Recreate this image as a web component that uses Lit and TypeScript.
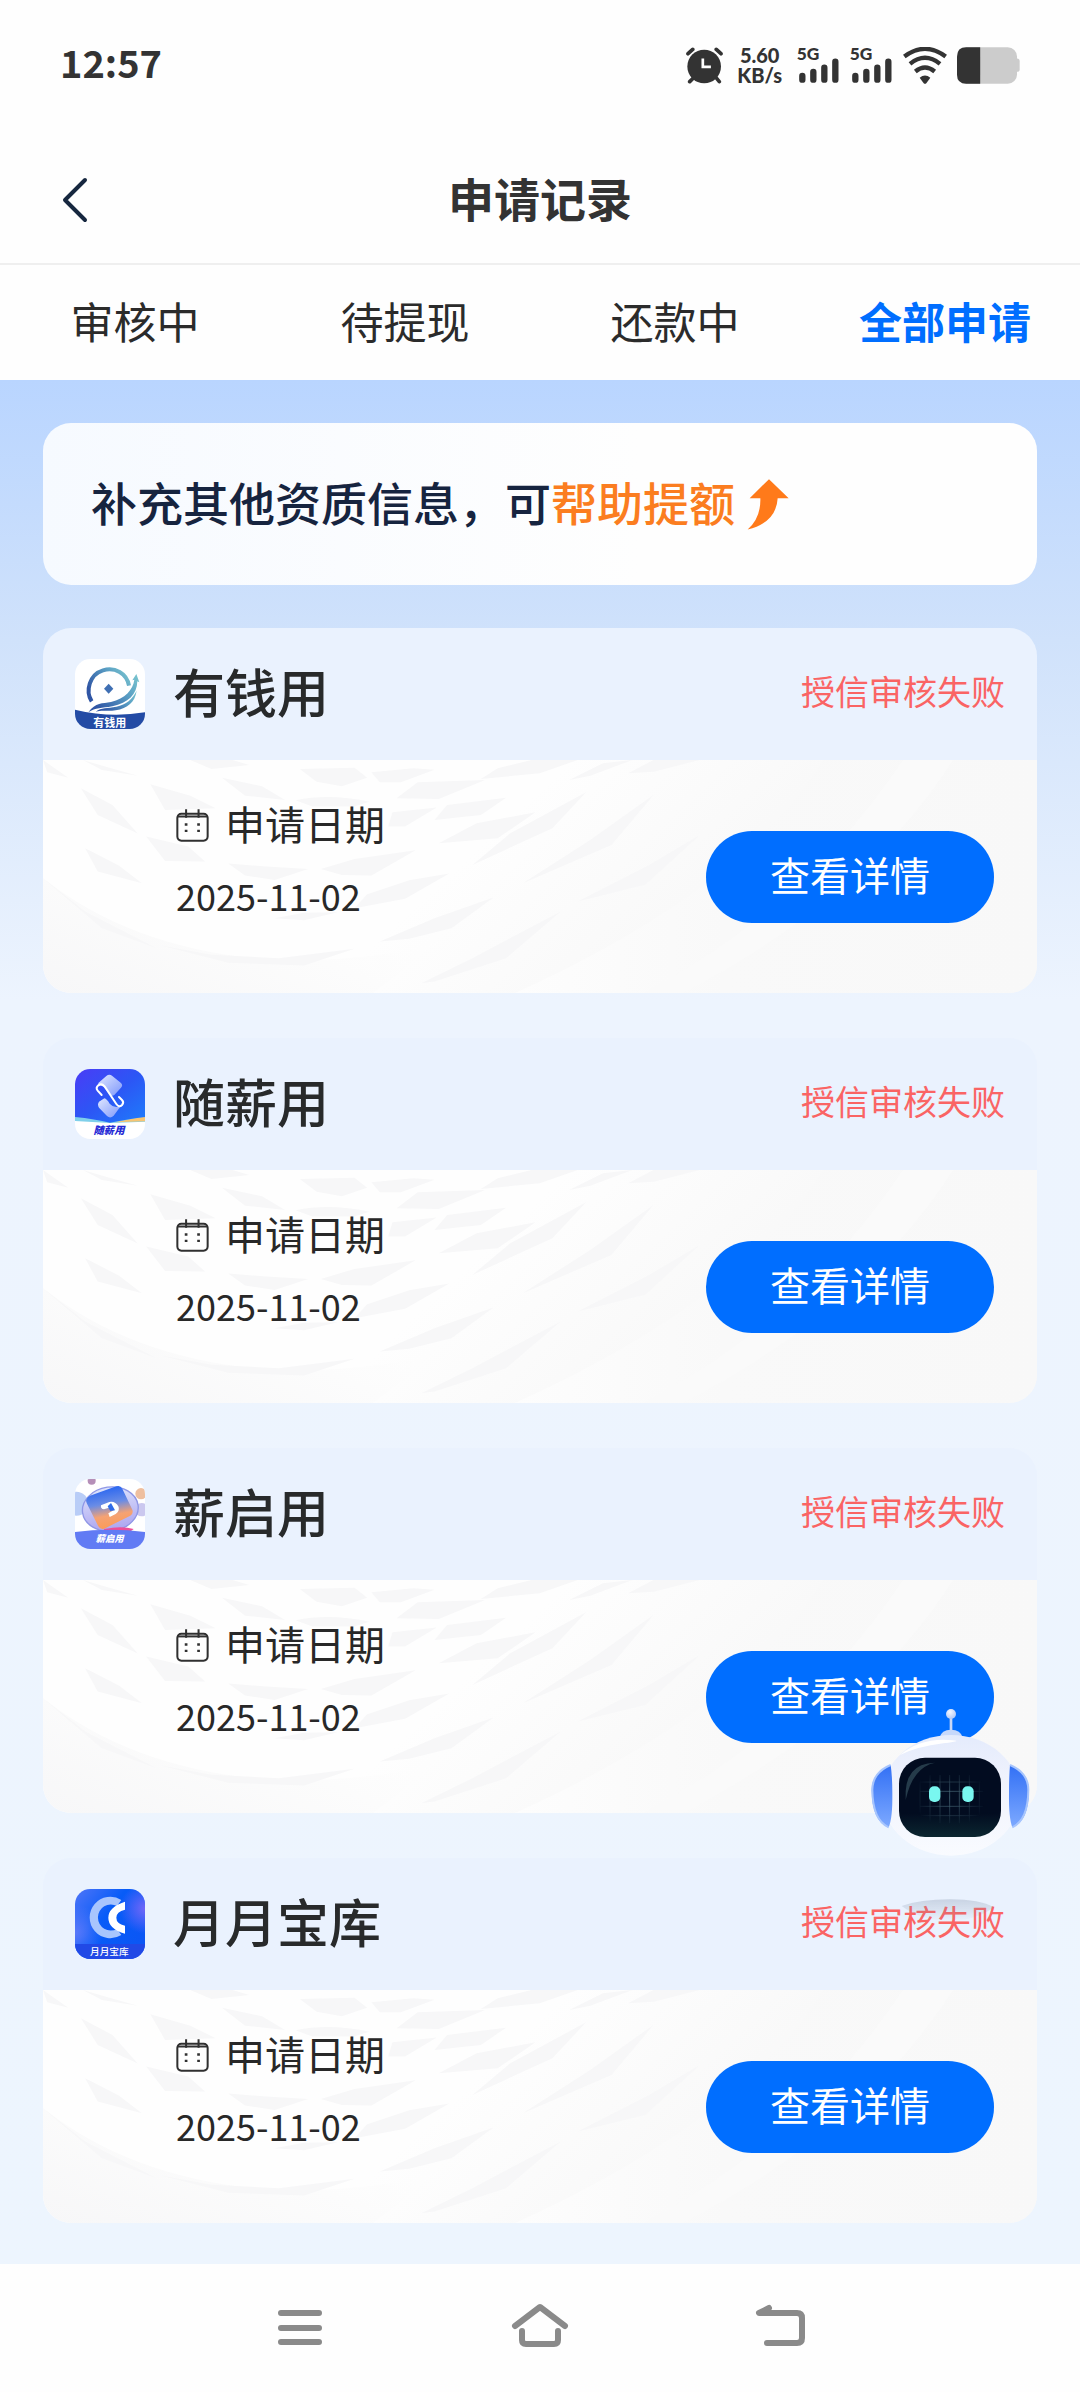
import { LitElement, html, css, svg, type TemplateResult } from "lit";
import { customElement, property } from "lit/decorators.js";

const youqian = html`<svg class="logo" viewBox="0 0 210 210" aria-hidden="true">
  <defs>
    <linearGradient id="ring" x1="0" x2="1" y1=".6" y2="0"><stop offset="0" stop-color="#2f55a4"/><stop offset=".6" stop-color="#5a9fc4"/><stop offset="1" stop-color="#7cc8cf"/></linearGradient>
    <clipPath id="c1"><rect width="210" height="210" rx="46"/></clipPath>
  </defs>
  <g clip-path="url(#c1)">
    <rect width="210" height="210" fill="#fff"/>
    <path d="M0 152Q105 178 210 160V210H0Z" fill="#234ba5"/>
    <path d="M50 127C30 96 44 46 84 34C120 24 155 42 162 80" fill="none" stroke="url(#ring)" stroke-width="12"/>
    <path d="M101 74L115 89L101 104L87 89Z" fill="#3f6fb3"/>
    <path d="M40 160C62 130 82 134 108 129C150 119 174 92 178 62L172 64L184 45L193 70L187 67C186 106 160 132 112 142C80 148 62 146 40 160Z" fill="url(#ring)"/>
    <path d="M62 158C80 144 96 149 124 143C154 136 172 121 185 95C180 130 158 147 122 154C96 158 84 152 62 158Z" fill="url(#ring)"/>
    <text x="104" y="203" text-anchor="middle" font-size="33" font-weight="700" fill="#fff">有钱用</text>
  </g></svg>`;

const suixin = html`<svg class="logo" viewBox="0 0 210 210" aria-hidden="true">
  <defs>
    <linearGradient id="sx" x1="0" x2="1" y1="0" y2="1"><stop offset="0" stop-color="#4a3cf6"/><stop offset=".5" stop-color="#2c56f5"/><stop offset="1" stop-color="#1e7cfb"/></linearGradient>
    <linearGradient id="sp" x1="0" x2="1" y1="0" y2="1"><stop offset="0" stop-color="#dfe6ff"/><stop offset="1" stop-color="#7d97fb"/></linearGradient>
    <clipPath id="c2"><rect width="210" height="210" rx="46"/></clipPath>
  </defs>
  <g clip-path="url(#c2)">
    <rect width="210" height="210" fill="#fff"/>
    <path d="M0 138L105 156L210 142V158L105 162L0 156Z" fill="#7fd0ea"/>
    <path d="M120 160L210 142V157Z" fill="#f6c573"/>
    <path d="M0 0H210V144Q150 152 105 161Q60 150 0 144Z" fill="url(#sx)"/>
    <path d="M70 42L94 21Q103 14 112 21L138 42Q145 49 138 56L118 78Q110 83 103 76L88 56Q80 46 70 48Z" fill="url(#sp)"/>
    <path d="M72 98L88 88Q96 90 104 104Q118 120 138 110L116 140Q106 150 96 141L72 116Q66 106 72 98Z" fill="url(#sp)"/>
    <path d="M80 78L68 65Q61 57 70 49Q80 42 89 52L124 105Q132 117 141 108Q148 100 141 93L132 84" fill="none" stroke="#fff" stroke-width="6" stroke-linecap="round"/>
    <text x="102" y="194" text-anchor="middle" font-size="31" font-weight="900" font-style="italic" fill="#262ad5">随薪用</text>
  </g></svg>`;

const xinqi = html`<svg class="logo" viewBox="0 0 210 210" aria-hidden="true">
  <defs>
    <linearGradient id="xq" x1=".4" x2=".6" y1="0" y2="1"><stop offset="0" stop-color="#2362f2"/><stop offset=".4" stop-color="#698ce6"/><stop offset=".68" stop-color="#f5a273"/><stop offset="1" stop-color="#fb9a55"/></linearGradient>
    <linearGradient id="xb" x1="0" x2="0" y1="0" y2="1"><stop offset="0" stop-color="#dce3fc"/><stop offset="1" stop-color="#aca4f0"/></linearGradient>
    <clipPath id="c3"><rect width="210" height="210" rx="46"/></clipPath>
  </defs>
  <g clip-path="url(#c3)">
    <rect width="210" height="210" fill="#fff"/>
    <circle cx="4" cy="74" r="36" fill="#b9cdf7"/>
    <circle cx="50" cy="5" r="12" fill="#b58fb8"/>
    <circle cx="198" cy="44" r="17" fill="#eebf9f"/>
    <circle cx="200" cy="92" r="20" fill="#cbc8ef"/>
    <ellipse cx="106" cy="90" rx="84" ry="66" transform="rotate(-8 106 90)" fill="url(#xb)" stroke="#8f97e6" stroke-width="4"/>
    <path d="M34 62Q36 54 45 50L124 22Q136 18 142 29L172 92Q176 104 166 110L88 149Q76 153 70 142L36 74Q32 67 34 62Z" fill="url(#xq)"/>
    <path d="M78 79L103 69Q120 65 130 82Q136 95 122 105L104 114L100 103L116 94L111 83L87 91Q76 90 78 79Z" fill="#fff"/>
    <path d="M98 82L108 72L120 94L106 96Z" fill="#306ce8"/>
    <path d="M88 150Q140 140 176 150L160 162H80Z" fill="#ed4e98"/>
    <path d="M0 159Q105 145 210 159V210H0Z" fill="#617bf4"/>
    <text x="104" y="189" text-anchor="middle" font-size="28" font-weight="900" font-style="italic" fill="#fff">薪启用</text>
  </g></svg>`;

const yueyue = html`<svg class="logo" viewBox="0 0 210 210" aria-hidden="true">
  <defs>
    <linearGradient id="yy" x1="0" x2="1" y1=".1" y2=".9"><stop offset="0" stop-color="#4772f8"/><stop offset=".4" stop-color="#075cf8"/><stop offset="1" stop-color="#0c55f4"/></linearGradient>
    <radialGradient id="yp" cx="1" cy=".28" r=".36"><stop offset="0" stop-color="#7167f8"/><stop offset="1" stop-color="#7167f8" stop-opacity="0"/></radialGradient>
    <radialGradient id="yq" cx="0" cy=".62" r=".4"><stop offset="0" stop-color="#5a79fa"/><stop offset="1" stop-color="#5a79fa" stop-opacity="0"/></radialGradient>
    <clipPath id="c4"><rect width="210" height="210" rx="46"/></clipPath>
  </defs>
  <g clip-path="url(#c4)">
    <rect width="210" height="210" fill="url(#yy)"/>
    <rect width="210" height="210" fill="url(#yp)"/>
    <rect width="210" height="210" fill="url(#yq)"/>
    <path d="M139 33A62 62 0 1 0 139 138L126 120A39 39 0 1 1 126 51Z" fill="#a8c5fd"/>
    <path d="M150 38V62Q124 68 124 86Q124 104 150 110V134Q100 120 100 86Q100 54 150 38Z" fill="#fff"/>
    <path d="M0 165H210V210H0Z" fill="#2149e6"/>
    <text x="103" y="197" text-anchor="middle" font-size="29" font-weight="500" fill="#fff">月月宝库</text>
  </g></svg>`;

const texture = html`<svg class="texture" viewBox="0 0 994 233" preserveAspectRatio="none" aria-hidden="true">
  <defs>
    <linearGradient id="base" x1="0" x2="1" y1="0" y2=".25"><stop offset="0" stop-color="#fefefe"/><stop offset=".5" stop-color="#fefefe"/><stop offset=".8" stop-color="#f8f8f8"/></linearGradient>
    <linearGradient id="foot" x1="0" x2="1" y1="1" y2=".3"><stop offset="0" stop-color="#f7f7f8"/><stop offset=".6" stop-color="#fcfcfc"/><stop offset="1" stop-color="#fefefe" stop-opacity="0"/></linearGradient>
    <linearGradient id="slope" x1="0" x2="1" y1="0" y2="0"><stop offset="0" stop-color="#fdfdfd"/><stop offset=".4" stop-color="#f9f9f9"/><stop offset="1" stop-color="#f8f8f8"/></linearGradient>
  </defs>
  <path d="M0 0H994V233H0Z" fill="url(#base)"/>
  <path d="M0 118Q90 190 230 200Q340 202 400 180L330 233H0Z" fill="url(#foot)"/>
  <path d="M994 0H780Q700 130 472 233H994Z" fill="url(#slope)"/>
  <path d="M860 0Q760 150 600 233H640Q820 140 910 0Z" fill="#fafafa"/>
  <g transform="scale(.421 .333) translate(0 -15)" fill="#f7f7f8">
    <path d="M0 15L60 68L10 52Z"/>
    <path d="M95 15Q150 36 225 62L140 45Z"/>
    <path d="M350 15L400 42L490 30L450 15Z"/>
    <path d="M610 42L740 38L770 68L710 94L650 80Z"/>
    <path d="M425 68L520 94L575 135L480 122Z"/>
    <path d="M255 88L350 122L410 160L290 165Z"/>
    <path d="M90 100L165 150L225 236L130 180Z"/>
    <path d="M600 136Q680 115 775 140L740 155H640Z"/>
    <path d="M780 52L880 40L930 44L850 82H800Z"/>
    <path d="M890 82L1050 75L940 132L840 130Z"/>
    <path d="M1080 40L1160 15H1270L1180 55L1040 72Z"/>
    <path d="M1250 75L1330 25L1400 15L1300 62Z"/>
    <path d="M1390 55L1450 15H1560L1450 50Z"/>
    <path d="M830 172L935 158L860 215H820Z"/>
    <path d="M960 150L1100 128L1040 180L930 195Z"/>
    <path d="M940 265L1030 205L1170 172L1080 250Z"/>
    <path d="M1290 112L1210 220L1020 330L1110 235Z"/>
    <path d="M245 245L345 275L385 320L290 318Z"/>
    <path d="M440 326L530 335L630 342L550 375L480 362Z"/>
    <path d="M660 342L740 312L885 286L780 362L710 360Z"/>
    <path d="M100 280L180 332L235 385L130 350Z"/>
    <path d="M770 418L870 376L965 356L860 432L740 460Z"/>
    <path d="M550 490L620 474L700 472L620 496Z"/>
    <path d="M1450 120L1350 270L1140 385L1300 255Z"/>
    <path d="M800 560L930 490L1070 428L970 520L870 552Z"/>
    <path d="M900 685L1020 610L1230 470L1100 610L930 680Z"/>
    <path d="M1560 240L1430 390L1270 440L1440 330Z"/>
    <path d="M280 572L400 600L560 610L740 582L620 632L440 624Z"/>
    <path d="M0 370L100 470L270 580L140 520Z"/>
  </g></svg>`;

const calendar = html`<svg class="calendar" viewBox="0 0 98 98" aria-hidden="true" fill="none" stroke="#303030" stroke-width="6">
  <rect x="4" y="14" width="90" height="80" rx="12"/><path d="M4 22H94"/><path d="M30 1V26M67 1V26"/>
  <path d="M26 46h8M63 46h8M26 65h8M63 65h8" stroke-width="7"/></svg>`;

const bars = svg`<path d="M11 53V64M44 41V64M77 28V64M110 10V64" stroke="#333" stroke-width="19" stroke-linecap="round"/>`;

const robot = html`<svg viewBox="0 0 660 780" aria-hidden="true">
  <defs>
    <linearGradient id="head" x1="0" x2="0" y1="0" y2="1"><stop offset="0" stop-color="#e4ebfc"/><stop offset=".35" stop-color="#eff2fd"/><stop offset="1" stop-color="#f9fbff"/></linearGradient>
    <linearGradient id="ear" x1="0" x2="0" y1="0" y2="1"><stop offset="0" stop-color="#3270f5"/><stop offset="1" stop-color="#7da9ff"/></linearGradient>
    <linearGradient id="face" x1="0" x2="0" y1="0" y2="1"><stop offset="0" stop-color="#020c20"/><stop offset=".7" stop-color="#020c20"/><stop offset="1" stop-color="#0b2630"/></linearGradient>
    <radialGradient id="ball" cx=".4" cy=".3" r=".8"><stop offset="0" stop-color="#f5f8ff"/><stop offset="1" stop-color="#a9c2f5"/></radialGradient>
    <radialGradient id="fade"><stop offset="0" stop-color="#fff"/><stop offset="1" stop-color="#000"/></radialGradient>
    <linearGradient id="shade" x1="0" x2="0" y1="0" y2="1"><stop offset="0" stop-color="#7c8da5" stop-opacity=".3"/><stop offset="1" stop-color="#7c8da5" stop-opacity="0"/></linearGradient>
    <mask id="grid"><ellipse cx="330" cy="322" rx="112" ry="92" fill="url(#fade)"/></mask>
  </defs>
  <path d="M185 648Q240 628 330 628Q420 628 462 652Q410 690 330 694Q240 690 185 648Z" fill="url(#shade)"/>
  <path d="M333 80V125" stroke="#c8d7f6" stroke-width="8"/>
  <circle cx="333" cy="72" r="15" fill="url(#ball)"/>
  <path d="M299 142Q304 120 333 119Q362 120 368 142Z" fill="#c6d8fb"/>
  <ellipse cx="333" cy="316" rx="207" ry="181" fill="url(#head)"/>
  <path d="M180 195Q240 145 325 150Q380 152 310 160Q230 170 180 195Z" fill="#fff"/>
  <path d="M152 225Q96 248 95 300Q96 395 146 412Q158 385 157 310Q157 260 152 225Z" fill="url(#ear)"/>
  <path d="M152 225Q97 248 97 300Q98 390 146 412" fill="none" stroke="#a7c5fd" stroke-width="6"/>
  <path d="M510 225Q566 248 567 300Q566 395 517 412Q506 385 507 310Q507 260 510 225Z" fill="url(#ear)"/>
  <path d="M510 225Q565 248 565 300Q564 390 517 412" fill="none" stroke="#a7c5fd" stroke-width="6"/>
  <rect x="177" y="203" width="306" height="238" rx="78" fill="url(#face)"/>
  <path d="M197 330Q190 220 285 218Q218 232 197 330Z" fill="#253b4a"/>
  <g mask="url(#grid)" stroke="#5c8390" stroke-width="2"><path d="M240 255V400M270 255V400M300 255V400M329 255V400M358 255V400M388 255V400M418 255V400M240 276H430M240 304H430M240 349H430M240 377H430"/></g>
  <rect x="267" y="289" width="34" height="47" rx="15" fill="#79f7f0"/><rect x="367" y="289" width="34" height="47" rx="15" fill="#79f7f0"/></svg>`;

interface LoanRecord { name: string; logo: TemplateResult; status: string; date: string; }

const records: LoanRecord[] = [
  { name: "有钱用", logo: youqian, status: "授信审核失败", date: "2025-11-02" },
  { name: "随薪用", logo: suixin, status: "授信审核失败", date: "2025-11-02" },
  { name: "薪启用", logo: xinqi, status: "授信审核失败", date: "2025-11-02" },
  { name: "月月宝库", logo: yueyue, status: "授信审核失败", date: "2025-11-02" },
];

@customElement("record-card")
export class RecordCard extends LitElement {
  @property({ attribute: false }) record!: LoanRecord;

  static styles = css`
    :host { display: block; border-radius: 28px; overflow: hidden; }
    .head { display: flex; align-items: center; height: 132px; padding: 0 32px; background: #eaf2fe; }
    .logo { width: 70px; height: 70px; flex: none; }
    .name { flex: 1; margin: 0 0 0 28px; padding-bottom: 6px; font-size: 52px; line-height: 72px; font-weight: 500; color: #282a2b; }
    .status { padding-bottom: 6px; font-size: 34px; line-height: 48px; color: #fa6464; }
    .body { display: grid; height: 233px; }
    .body > * { grid-area: 1 / 1; }
    .texture { width: 100%; height: 100%; display: block; min-height: 0; }
    .info { position: relative; display: flex; align-items: center; justify-content: space-between; padding: 0 43px 0 133px; }
    .facts { display: flex; flex-direction: column; gap: 16px; margin: 0; padding-bottom: 36px; color: #282828; }
    .label { display: flex; align-items: center; gap: 16px; font-size: 40px; line-height: 56px; }
    .calendar { width: 33px; height: 33px; padding-top: 6px; }
    .date { margin: 0; font-size: 36px; line-height: 56px; }
    .detail { width: 288px; height: 92px; border: 0; border-radius: 46px; padding: 0 0 6px; background: #006eff; color: #fff; font: inherit; font-size: 40px; line-height: 56px; }
  `;

  render() {
    const r = this.record;
    return html`
      <div class="head">${r.logo}<h2 class="name">${r.name}</h2><span class="status">${r.status}</span></div>
      <div class="body">
        ${texture}
        <div class="info">
          <dl class="facts">
            <dt class="label">${calendar}申请日期</dt>
            <dd class="date">${r.date}</dd>
          </dl>
          <button class="detail" type="button">查看详情</button>
        </div>
      </div>`;
  }
}

@customElement("app-root")
export class AppRoot extends LitElement {
  static styles = css`
    :host { display: flex; flex-direction: column; min-height: 100vh; background: #fefefe; color: #2b2b2b; font-family: "Noto Sans CJK SC", sans-serif; }
    * { box-sizing: border-box; }
    button { font: inherit; border: 0; padding: 0; background: none; color: inherit; }
    svg { display: block; flex: none; }
    .statusbar { display: flex; align-items: center; justify-content: space-between; height: 130px; padding: 0 60px; color: #333; }
    .time { padding-bottom: 6px; font-size: 38px; line-height: 56px; font-weight: 700; }
    .indicators { display: flex; align-items: center; gap: 14px; }
    .alarm { width: 37px; height: 37px; }
    .speed { display: flex; flex-direction: column; align-items: center; font-family: Lato, sans-serif; font-size: 20px; line-height: 20px; font-weight: 900; }
    .signal { width: 44px; height: 50px; }
    .signals { display: flex; gap: 9px; }
    .wifi { width: 44px; height: 37px; }
    .battery { width: 63px; height: 37px; }
    .radio { display: flex; align-items: center; gap: 10px; }
    .titlebar { display: grid; grid-template-columns: 1fr auto 1fr; align-items: center; height: 135px; padding: 6px 60px 0; border-bottom: 2px solid #efefef; }
    .back { display: flex; width: 48px; }
    .chevron { width: 28px; height: 46px; }
    .title { margin: 0; padding-bottom: 6px; font-size: 46px; line-height: 64px; font-weight: 700; color: #333; }
    .tabs { display: grid; grid-template-columns: repeat(4, 1fr); height: 115px; }
    .tab { padding-bottom: 6px; font-size: 43px; line-height: 60px; white-space: nowrap; }
    .active { color: #006eff; font-weight: 700; }
    .content { flex: 1; padding: 43px 43px 41px; background: linear-gradient(#b9d5ff, #d0e2fb 260px, #edf4fe 620px, #edf5fe); }
    .notice { display: flex; align-items: center; height: 162px; padding: 0 48px; border-radius: 28px; background: linear-gradient(90deg, #f6faff, #fefefe 60%); color: #16243f; font-size: 46px; line-height: 64px; font-weight: 500; }
    .message { margin: 0; padding-bottom: 6px; }
    .boost { color: #fb7d20; text-decoration: none; }
    .arrow { width: 42px; height: 51px; margin-left: 12px; }
    .records { display: flex; flex-direction: column; gap: 45px; margin-top: 43px; }
    .navbar { display: flex; align-items: center; justify-content: center; gap: 176px; height: 128px; padding-bottom: 2px; }
    .navicon { width: 64px; height: 50px; }
    .assistant { position: fixed; right: 20px; bottom: 442px; width: 220px; height: 260px; }
  `;

  render() {
    return html`
      <header>
        <div class="statusbar">
          <span class="time">12:57</span>
          <div class="indicators">
            <svg class="alarm" viewBox="0 0 110 110" aria-hidden="true"><g stroke="#333" stroke-width="11" stroke-linecap="round"><path d="M6 20L20 7M104 20L90 7M22 92L11 103M90 92L99 103"/></g><circle cx="54" cy="58" r="50" fill="#333"/><path d="M50 34V59H74" fill="none" stroke="#fff" stroke-width="8"/></svg>
            <div class="speed"><span>5.60</span><span>KB/s</span></div>
            <div class="radio">
              <div class="signals">
                ${[0, 1].map(() => html`<svg class="signal" viewBox="-8 -55 132 150" aria-hidden="true"><text x="-6" y="6" font-family="Lato, sans-serif" font-size="52" font-weight="900" fill="#333">5G</text>${bars}</svg>`)}
              </div>
              <svg class="wifi" viewBox="0 0 132 110" aria-hidden="true"><g fill="none" stroke="#333" stroke-width="13"><path d="M4 28Q66 -18 128 28"/><path d="M21 50Q66 14 111 50"/><path d="M37 73Q66 49 95 73"/></g><path d="M50 92Q66 78 82 92L70 108Q66 112 62 108Z" fill="#333"/></svg>
              <svg class="battery" viewBox="0 0 190 110" aria-hidden="true"><rect width="181" height="110" rx="28" fill="#ccc"/><rect x="172" y="34" width="17" height="40" rx="8" fill="#ccc"/><path d="M28 0H70V110H28Q0 110 0 82V28Q0 0 28 0Z" fill="#333"/></svg>
            </div>
          </div>
        </div>
        <div class="titlebar">
          <button class="back" type="button" aria-label="返回"><svg class="chevron" viewBox="0 0 28 46" fill="none" stroke="#16273f" stroke-width="4" stroke-linecap="round" stroke-linejoin="round"><path d="M25 3L5 23L25 43"/></svg></button>
          <h1 class="title">申请记录</h1>
        </div>
      </header>
      <nav class="tabs">
        <button class="tab" type="button">审核中</button>
        <button class="tab" type="button">待提现</button>
        <button class="tab" type="button">还款中</button>
        <button class="tab active" type="button" aria-current="page">全部申请</button>
      </nav>
      <main class="content">
        <section class="notice">
          <p class="message">补充其他资质信息，可<a class="boost" href="#boost">帮助提额</a></p>
          <svg class="arrow" viewBox="0 0 126 152" aria-hidden="true"><path d="M66 0L125 57H92Q88 130 2 151Q42 116 40 57H8Z" fill="#ff7a1a"/></svg>
        </section>
        <section class="records">
          ${records.map((r) => html`<record-card .record=${r}></record-card>`)}
        </section>
      </main>
      <footer class="navbar">
        <button type="button" aria-label="菜单"><svg class="navicon" viewBox="0 0 64 50" stroke="#8a8a8a" stroke-width="6" stroke-linecap="round"><path d="M13 11H51M13 26H51M13 40H51"/></svg></button>
        <button type="button" aria-label="主页"><svg class="navicon" viewBox="0 0 64 50" fill="none" stroke="#8a8a8a" stroke-width="6" stroke-linecap="round" stroke-linejoin="round"><path d="M7 24L32 5L57 24"/><path d="M14 29V38Q14 42 18 42H46Q50 42 50 38V29"/></svg></button>
        <button type="button" aria-label="后退"><svg class="navicon" viewBox="0 0 64 50" fill="none" stroke="#8a8a8a" stroke-width="6" stroke-linecap="round" stroke-linejoin="round"><path d="M21 6L11 11H49Q54 11 54 16V36Q54 41 49 41H19"/></svg></button>
      </footer>
      <button class="assistant" type="button" aria-label="智能客服">${robot}</button>`;
  }
}
